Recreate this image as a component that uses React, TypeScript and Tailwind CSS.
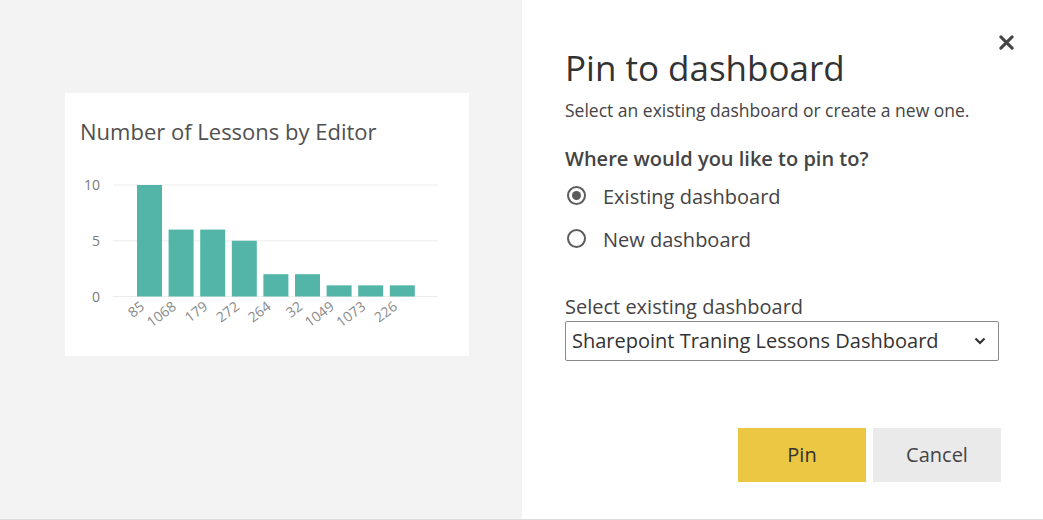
import React from "react";

const bars = [
  { label: "85", v: 10 },
  { label: "1068", v: 6 },
  { label: "179", v: 6 },
  { label: "272", v: 5 },
  { label: "264", v: 2 },
  { label: "32", v: 2 },
  { label: "1049", v: 1 },
  { label: "1073", v: 1 },
  { label: "226", v: 1 },
];

const FONT = "'Open Sans', 'Noto Sans', sans-serif";

function Chart() {
  // svg origin at absolute (65, 150)
  const x0 = 72;
  const pitch = 31.6;
  const bw = 25;
  const baseY = 146.5;
  const unit = 11.15;
  return (
    <svg width="404" height="206" viewBox="0 0 404 206" className="block">
      {[0, 5, 10].map((t) => {
        const y = baseY - t * unit;
        return (
          <g key={t}>
            <line x1="48" x2="373" y1={y} y2={y} stroke="#ececec" strokeWidth="1" />
            <text x="35" y={y + 5} textAnchor="end" fontSize="14" fill="#7a7a7a" fontFamily={FONT}>
              {t}
            </text>
          </g>
        );
      })}
      {bars.map((b, i) => {
        const x = x0 + i * pitch;
        const h = b.v * unit;
        return <rect key={b.label} x={x} y={baseY - h} width={bw} height={h} fill="#52b5a8" />;
      })}
      {bars.map((b, i) => {
        const cx = x0 + i * pitch + bw / 2 - 4;
        const y = baseY + 12;
        return (
          <text
            key={"l" + b.label}
            x={cx}
            y={y}
            textAnchor="end"
            fontSize="14"
            fill="#8a8a8a"
            fontFamily={FONT}
            transform={`rotate(-37 ${cx} ${y})`}
          >
            {b.label}
          </text>
        );
      })}
    </svg>
  );
}

function Radio({ checked, label }: { checked: boolean; label: string }) {
  return (
    <div className="flex items-start h-[24px]">
      <span className="mt-[1px] ml-[2px] w-[19px] h-[19px] rounded-full border-[2.5px] border-[#5c5c5c] flex items-center justify-center">
        {checked && <span className="w-[9px] h-[9px] rounded-full bg-[#5c5c5c]" />}
      </span>
      <span className="ml-[17px] text-[20px] leading-[24px] text-[#444]">{label}</span>
    </div>
  );
}

export default function App() {
  return (
    <div className="w-[1043px] h-[520px] flex border-b border-[#dcdcdc] overflow-hidden" style={{ fontFamily: FONT }}>
      <div className="w-[522px] h-full bg-[#f3f3f3] pl-[65px] pt-[93px]">
        <div className="w-[404px] h-[263px] bg-white">
          <div className="h-[57px] pl-[15px] pt-[24px] text-[22px] leading-[28px] text-[#505050]">
            Number of Lessons by Editor
          </div>
          <Chart />
        </div>
      </div>
      <div className="flex-1 h-full bg-white relative pl-[43px]">
        <button className="absolute right-[28px] top-[33px] w-[18px] h-[18px] flex items-center justify-center">
          <svg width="15" height="15" viewBox="0 0 16 16">
            <path d="M2 2 L14 14 M14 2 L2 14" stroke="#444" strokeWidth="3.2" strokeLinecap="round" />
          </svg>
        </button>
        <div className="pt-[46px] text-[35px] leading-[44px] text-[#333]">Pin to dashboard</div>
        <div className="mt-[8px] text-[17.5px] leading-[24px] text-[#444]">
          Select an existing dashboard or create a new one.
        </div>
        <div className="mt-[24px] text-[20px] leading-[26px] font-semibold text-[#444]">
          Where would you like to pin to?
        </div>
        <div className="mt-[13px] flex flex-col gap-[19px]">
          <Radio checked label="Existing dashboard" />
          <Radio checked={false} label="New dashboard" />
        </div>
        <div className="mt-[43px] text-[20px] leading-[24px] text-[#444]">Select existing dashboard</div>
        <div className="mt-[2px] w-[434px] h-[40px] border border-[#8a8a8a] rounded-[2px] flex items-center justify-between pl-[6px] pr-[12px]">
          <span className="text-[20px] leading-[24px] text-[#333]">Sharepoint Traning Lessons Dashboard</span>
          <svg width="12" height="8" viewBox="0 0 12 8">
            <path d="M1.5 1.5 L6 6 L10.5 1.5" stroke="#333" strokeWidth="2.2" fill="none" />
          </svg>
        </div>
        <div className="mt-[67px] flex justify-end gap-[7px] pr-[42px]">
          <button className="w-[128px] h-[54px] bg-[#ebc744] text-[20px] text-[#333]">Pin</button>
          <button className="w-[128px] h-[54px] bg-[#eaeaea] text-[20px] text-[#444]">Cancel</button>
        </div>
      </div>
    </div>
  );
}
